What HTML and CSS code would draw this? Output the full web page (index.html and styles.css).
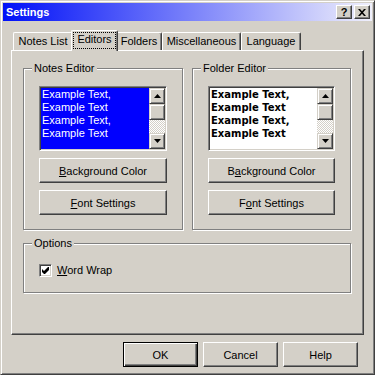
FILE: index.html
```html
<!DOCTYPE html>
<html>
  <head>
    <meta charset="UTF-8" />
    <meta name="viewport" content="width=device-width, initial-scale=1.0" />
    <title>Settings</title>
    <link rel="stylesheet" href="styles.css">
  </head>
  <body>
    <div class="window">
      <div class="titlebar">
        <span class="title">Settings</span>
        <div class="caption-buttons">
          <button class="caption-btn">?</button>
          <button class="caption-btn">
            <svg width="8" height="7" viewBox="0 0 8 7"><path d="M0 0h2l2 2.2L6 0h2L5 3.5 8 7H6L4 4.8 2 7H0l3-3.5z" fill="#000"/></svg>
          </button>
        </div>
      </div>
      <div class="dialog">
        <div class="tabs">
          <div class="tab tab-notes">Notes List</div>
          <div class="tab tab-editors selected"><span class="focus">Editors</span></div>
          <div class="tab tab-folders">Folders</div>
          <div class="tab tab-misc">Miscellaneous</div>
          <div class="tab tab-language">Language</div>
        </div>
        <div class="panel">
          <div class="editors">
            <div class="group">
              <div class="legend">Notes Editor</div>
              <div class="listbox">
                <div class="list-text notes-text">Example Text,<br>Example Text<br>Example Text,<br>Example Text</div>
                <div class="scrollbar">
                  <div class="sb-btn"><svg width="7" height="4" viewBox="0 0 7 4"><path d="M3.5 0 7 4H0z" fill="#000"/></svg></div>
                  <div class="sb-btn"></div>
                  <div class="sb-track"></div>
                  <div class="sb-btn"><svg width="7" height="4" viewBox="0 0 7 4"><path d="M0 0h7L3.5 4z" fill="#000"/></svg></div>
                </div>
              </div>
              <button class="btn"><u>B</u>ackground Color</button>
              <button class="btn"><u>F</u>ont Settings</button>
            </div>
            <div class="group">
              <div class="legend">Folder Editor</div>
              <div class="listbox">
                <div class="list-text folder-text">Example Text,<br>Example Text<br>Example Text,<br>Example Text</div>
                <div class="scrollbar">
                  <div class="sb-btn"><svg width="7" height="4" viewBox="0 0 7 4"><path d="M3.5 0 7 4H0z" fill="#000"/></svg></div>
                  <div class="sb-btn"></div>
                  <div class="sb-track"></div>
                  <div class="sb-btn"><svg width="7" height="4" viewBox="0 0 7 4"><path d="M0 0h7L3.5 4z" fill="#000"/></svg></div>
                </div>
              </div>
              <button class="btn">B<u>a</u>ckground Color</button>
              <button class="btn">F<u>o</u>nt Settings</button>
            </div>
          </div>
          <div class="group options">
            <div class="legend">Options</div>
            <label class="check-row">
              <span class="checkbox">
                <svg width="7" height="7" viewBox="0 0 7 7"><path d="M0 2l2 2 4-4h1v3L3 7H2L0 5z" fill="#000"/></svg>
              </span>
              <span><u>W</u>ord Wrap</span>
            </label>
          </div>
        </div>
        <div class="actions">
          <button class="btn action default">OK</button>
          <button class="btn action">Cancel</button>
          <button class="btn action">Help</button>
        </div>
      </div>
    </div>
  </body>
</html>
```

FILE: styles.css
```css
body {
  margin: 0;
  font-family: "Liberation Sans", Arial, sans-serif;
  font-size: 11px;
  color: #000;
}
.window {
  width: 375px;
  height: 375px;
  box-sizing: border-box;
  background-color: #d4d0c8;
  border: 1px solid;
  border-color: #d4d0c8 #404040 #404040 #d4d0c8;
  box-shadow: inset 1px 1px #fff, inset -1px -1px #808080;
  padding: 2px;
}
.titlebar {
  height: 18px;
  display: flex;
  align-items: center;
  justify-content: space-between;
  padding: 0 2px 0 3px;
  background: linear-gradient(to right, #0010f8, #f0f0fc);
}
.title {
  color: #fff;
  font-weight: bold;
  line-height: 13px;
}
.caption-buttons {
  display: flex;
  gap: 2px;
}
.caption-btn {
  width: 16px;
  height: 14px;
  box-sizing: border-box;
  padding: 0;
  display: flex;
  align-items: center;
  justify-content: center;
  background-color: #d4d0c8;
  border: 1px solid;
  border-color: #fff #404040 #404040 #fff;
  box-shadow: inset -1px -1px #808080;
  font: bold 11px "Liberation Sans", Arial, sans-serif;
  line-height: 12px;
  color: #000;
}
.dialog {
  padding: 9px 8px 0;
}
.tabs {
  display: flex;
  align-items: flex-end;
  height: 20px;
  padding-left: 2px;
}
.tab {
  height: 18px;
  box-sizing: border-box;
  border: 1px solid;
  border-color: #fff #404040 #fff #fff;
  border-bottom: none;
  border-radius: 2px 2px 0 0;
  box-shadow: inset -1px 0 #808080;
  background-color: #d4d0c8;
  padding-top: 2px;
  line-height: 13px;
  text-align: center;
  white-space: nowrap;
}
.tab-notes {
  width: 60px;
}
.tab-editors {
  width: 43px;
}
.tab-folders {
  width: 46px;
}
.tab-misc {
  width: 79px;
}
.tab-language {
  width: 60px;
}
.tab.selected {
  position: relative;
  z-index: 1;
  width: 47px;
  height: 21px;
  margin: 0 -2px -1px;
  padding-top: 1px;
}
.focus {
  display: inline-block;
  border: 1px dotted #000;
  padding: 0 3px 2px;
}
.panel {
  height: 285px;
  box-sizing: border-box;
  border: 1px solid;
  border-color: #fff #404040 #404040 #fff;
  box-shadow: inset -1px -1px #808080;
  padding: 17px 12px 0 11px;
}
.editors {
  display: grid;
  grid-template-columns: 160px 159px;
  gap: 9px;
}
.group {
  border: 1px solid #808080;
  box-shadow: inset 1px 1px #fff, 1px 1px #fff;
  padding: 0 15px 14px;
}
.legend {
  display: table;
  margin: -7px 0 0 -7px;
  padding: 0 2px;
  background-color: #d4d0c8;
  line-height: 13px;
}
.listbox {
  display: flex;
  height: 65px;
  box-sizing: border-box;
  margin-top: 11px;
  border: 1px solid;
  border-color: #808080 #fff #fff #808080;
  box-shadow: inset 1px 1px #404040, inset -1px -1px #d4d0c8;
  padding: 1px;
}
.list-text {
  flex: 1;
  padding-left: 1px;
  line-height: 13px;
  white-space: nowrap;
  overflow: hidden;
}
.notes-text {
  background-color: #0000ff;
  color: #fff;
}
.folder-text {
  background-color: #fff;
  font-family: "DejaVu Sans", Verdana, sans-serif;
  font-weight: bold;
  font-size: 10px;
}
.scrollbar {
  width: 16px;
  display: flex;
  flex-direction: column;
}
.sb-btn {
  height: 16px;
  box-sizing: border-box;
  display: flex;
  align-items: center;
  justify-content: center;
  background-color: #d4d0c8;
  border: 1px solid;
  border-color: #d4d0c8 #404040 #404040 #d4d0c8;
  box-shadow: inset 1px 1px #fff, inset -1px -1px #808080;
}
.sb-track {
  flex: 1;
  background-color: #fff;
  background-image: conic-gradient(#d4d0c8 25%, #fff 0 50%, #d4d0c8 0 75%, #fff 0);
  background-size: 2px 2px;
}
.btn {
  display: block;
  width: 100%;
  height: 25px;
  margin-top: 7px;
  padding: 0;
  font: 11px "Liberation Sans", Arial, sans-serif;
  color: #000;
  background-color: #d4d0c8;
  border: 1px solid;
  border-color: #fff #404040 #404040 #fff;
  box-shadow: inset -1px -1px #808080;
}
.options {
  margin-top: 13px;
  padding-bottom: 15px;
}
.check-row {
  display: flex;
  align-items: center;
  gap: 5px;
  margin-top: 14px;
  line-height: 13px;
}
.checkbox {
  width: 13px;
  height: 13px;
  box-sizing: border-box;
  display: flex;
  align-items: center;
  justify-content: center;
  background-color: #fff;
  border: 1px solid;
  border-color: #808080 #fff #fff #808080;
  box-shadow: inset 1px 1px #404040, inset -1px -1px #d4d0c8;
}
.actions {
  display: flex;
  justify-content: flex-end;
  gap: 5px;
  margin-top: 7px;
  padding-right: 6px;
}
.btn.action {
  width: 75px;
  margin-top: 0;
}
.btn.default {
  border: 1px solid #000;
  box-shadow: inset 1px 1px #fff, inset -1px -1px #404040, inset -2px -2px #808080;
}
```
